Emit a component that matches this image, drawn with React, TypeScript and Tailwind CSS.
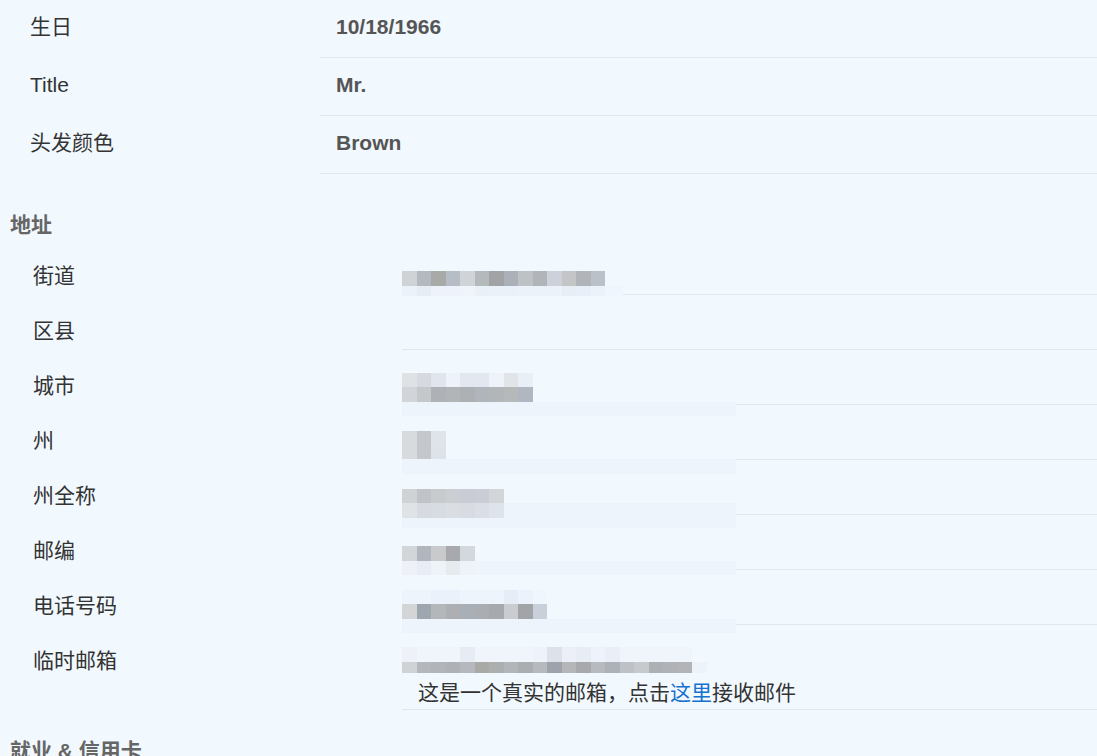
import * as React from "react";

type MRow = { h: number; cells?: string[]; tail?: string };

const F = "#eef4fc"; // faint edge of the blurred pictures

const topRows = [
  { label: "生日", value: "10/18/1966" },
  { label: "Title", value: "Mr." },
  { label: "头发颜色", value: "Brown" },
];

// blurred values, one mosaic per address row
const address: { label: string; top?: number; width?: number; rows?: MRow[] }[] = [
  {
    label: "街道",
    top: 31,
    width: 221,
    rows: [
      {
        h: 15,
        cells: ["#d0d3d6", "#b4b9c0", "#a8aaa8", "#b6bdc4", "#d0d3d8", "#b4babb", "#a2a3a5", "#acb1b9", "#bdc2c4", "#b1b5b9", "#cdd1da", "#c3c5c7", "#b1b4b8", "#bbc1c9"],
      },
      {
        h: 10,
        cells: ["#ecf2fa", "#e6edf5", "#eef3fb", "#eef3fb", "#f0f5fc", "#e9f0f8", "#eaf1f9", "#eaf1f9", "#ebf2fa", "#ebf2fa", "#ebf2fa", "#e7eef6", "#e9eff8", "#ebf2fa"],
        tail: "#eff6fd",
      },
    ],
  },
  { label: "区县" },
  {
    label: "城市",
    top: 23,
    width: 334,
    rows: [
      { h: 14, cells: ["#dfe2e5", "#d6d9e0", "#e1e5ee", "#eef2fa", "#e2e7f0", "#e2e7f0", "#eef3fa", "#e1e5e8", "#e9eff7"] },
      { h: 15, cells: ["#d1d4d8", "#c5c8ca", "#aeb2b6", "#b2b5b8", "#aeb1b3", "#b0b5bc", "#b3b6b8", "#b6b9ba", "#b1b7c0"] },
      { h: 14, tail: F },
    ],
  },
  {
    label: "州",
    top: 26,
    width: 334,
    rows: [
      { h: 15, cells: ["#d8dbde", "#c4c7cb", "#dfe4ea"] },
      { h: 13, cells: ["#d8dbde", "#c4c7cb", "#dee3e9"] },
      { h: 15, tail: F },
    ],
  },
  {
    label: "州全称",
    top: 29,
    width: 334,
    rows: [
      { h: 14, cells: ["#d0d3d6", "#c0c3c7", "#c8cbce", "#cbced2", "#c9ccd4", "#cacdd5", "#d3d6d9"] },
      { h: 15, cells: ["#e0e3e6", "#d7dae1", "#d7dbe2", "#dadee2", "#d8dce2", "#dadee6", "#dfe3ea"], tail: F },
      { h: 10, tail: F },
    ],
  },
  {
    label: "邮编",
    top: 31,
    width: 334,
    rows: [
      { h: 15, cells: ["#d2d6d9", "#b0b5be", "#c9cacc", "#a7a9ae", "#d3d8de"] },
      { h: 14, cells: ["#eef1f8", "#e8ecf4", "#eef2f9", "#e6ebee", "#eef2f9"], tail: F },
    ],
  },
  {
    label: "电话号码",
    top: 20,
    width: 334,
    rows: [
      { h: 14, cells: ["#eef4fc", "#eef4fc", "#ebf1fa", "#ebf1fa", "#eef4fc", "#eef4fc", "#eef4fc", "#e6edf6", "#ebf2fb", "#f0f6fd"] },
      { h: 15, cells: ["#d3d5d7", "#9ea7b0", "#b4b7ba", "#adafb2", "#a8afb7", "#aaaeb3", "#a6a9ae", "#c9cdd1", "#a3a4a7", "#c9d0d9"] },
      { h: 14, tail: F },
    ],
  },
];

const emailRows: MRow[] = [
  {
    h: 15,
    cells: ["#eef1f8", "#f0f5fc", "#f0f5fc", "#f0f5fc", "#e6ebf4", "#f0f5fc", "#f0f5fc", "#f0f5fc", "#f0f5fc", "#eef2fa", "#dde2ea", "#eceff7", "#e8edf5", "#eef2fa", "#e9eef7", "#f0f5fc", "#f0f5fc", "#f0f5fc", "#f0f5fc", "#f0f5fc"],
  },
  {
    h: 11,
    cells: ["#d0d3d6", "#b4b8bd", "#b1b4b9", "#aeb1b6", "#b5b9bf", "#a9aaa6", "#acaeb0", "#b2b6ba", "#aaaeb1", "#b6babf", "#9ea3ab", "#b4b6b8", "#a7a9ad", "#b7bbc0", "#adb2b8", "#bec2c6", "#c6cacc", "#adb0b4", "#afb2b6", "#b2b4b7", "#eef3fa"],
  },
];

const MosaicRows = ({ rows, width }: { rows: MRow[]; width: number }) => (
  <div className="flex flex-col" style={{ width }}>
    {rows.map((r, i) => (
      <div key={i} className="flex" style={{ height: r.h }}>
        {(r.cells || []).map((c, j) => (
          <div key={j} className="w-[14.5px] shrink-0" style={{ background: c }} />
        ))}
        {r.tail && <div className="flex-1" style={{ background: r.tail }} />}
      </div>
    ))}
  </div>
);

export default function App() {
  return (
    <div className="min-h-screen bg-[#f1f8fe] font-['Liberation_Sans','Noto_Sans_CJK_SC',sans-serif] text-[21px] text-[#333] overflow-hidden">
      {/* basic info */}
      <div className="flex flex-col">
        {topRows.map((r) => (
          <div key={r.label} className="flex h-[58px]">
            <div className="flex w-[320px] shrink-0 items-center pb-[4px] pl-[30px]">{r.label}</div>
            <div className="flex flex-1 items-center border-b border-[#e3e6ea] pb-[3px] pl-[16px] font-bold text-[#555]">
              {r.value}
            </div>
          </div>
        ))}
      </div>

      {/* address */}
      <h2 className="pl-[10px] pt-[39px] pb-[3px] text-[21px] leading-[24px] font-bold text-[#666]">地址</h2>
      <div className="flex flex-col">
        {address.map((r) => (
          <div key={r.label} className="flex h-[55px]">
            <div className="w-[402px] shrink-0 pl-[33px] pt-[24px] leading-[24px]">{r.label}</div>
            <div className="relative flex-1 border-b border-[#e3e6ea]">
              {r.rows && (
                <div className="absolute left-0" style={{ top: r.top }}>
                  <MosaicRows rows={r.rows} width={r.width || 334} />
                </div>
              )}
            </div>
          </div>
        ))}
        <div className="flex">
          <div className="w-[402px] shrink-0 pl-[33px] pt-[24px] leading-[24px]">临时邮箱</div>
          <div className="flex-1 border-b border-[#e3e6ea] pt-[22px]">
            <MosaicRows rows={emailRows} width={304} />
            <p className="pl-[16px] pt-[4px] leading-[32px]">
              这是一个真实的邮箱，点击<a className="text-[#1670d0]">这里</a>接收邮件
            </p>
          </div>
        </div>
      </div>

      {/* employment */}
      <h2 className="pl-[10px] pt-[29px] text-[21px] leading-[24px] font-bold text-[#666]">就业 &amp; 信用卡</h2>
    </div>
  );
}
